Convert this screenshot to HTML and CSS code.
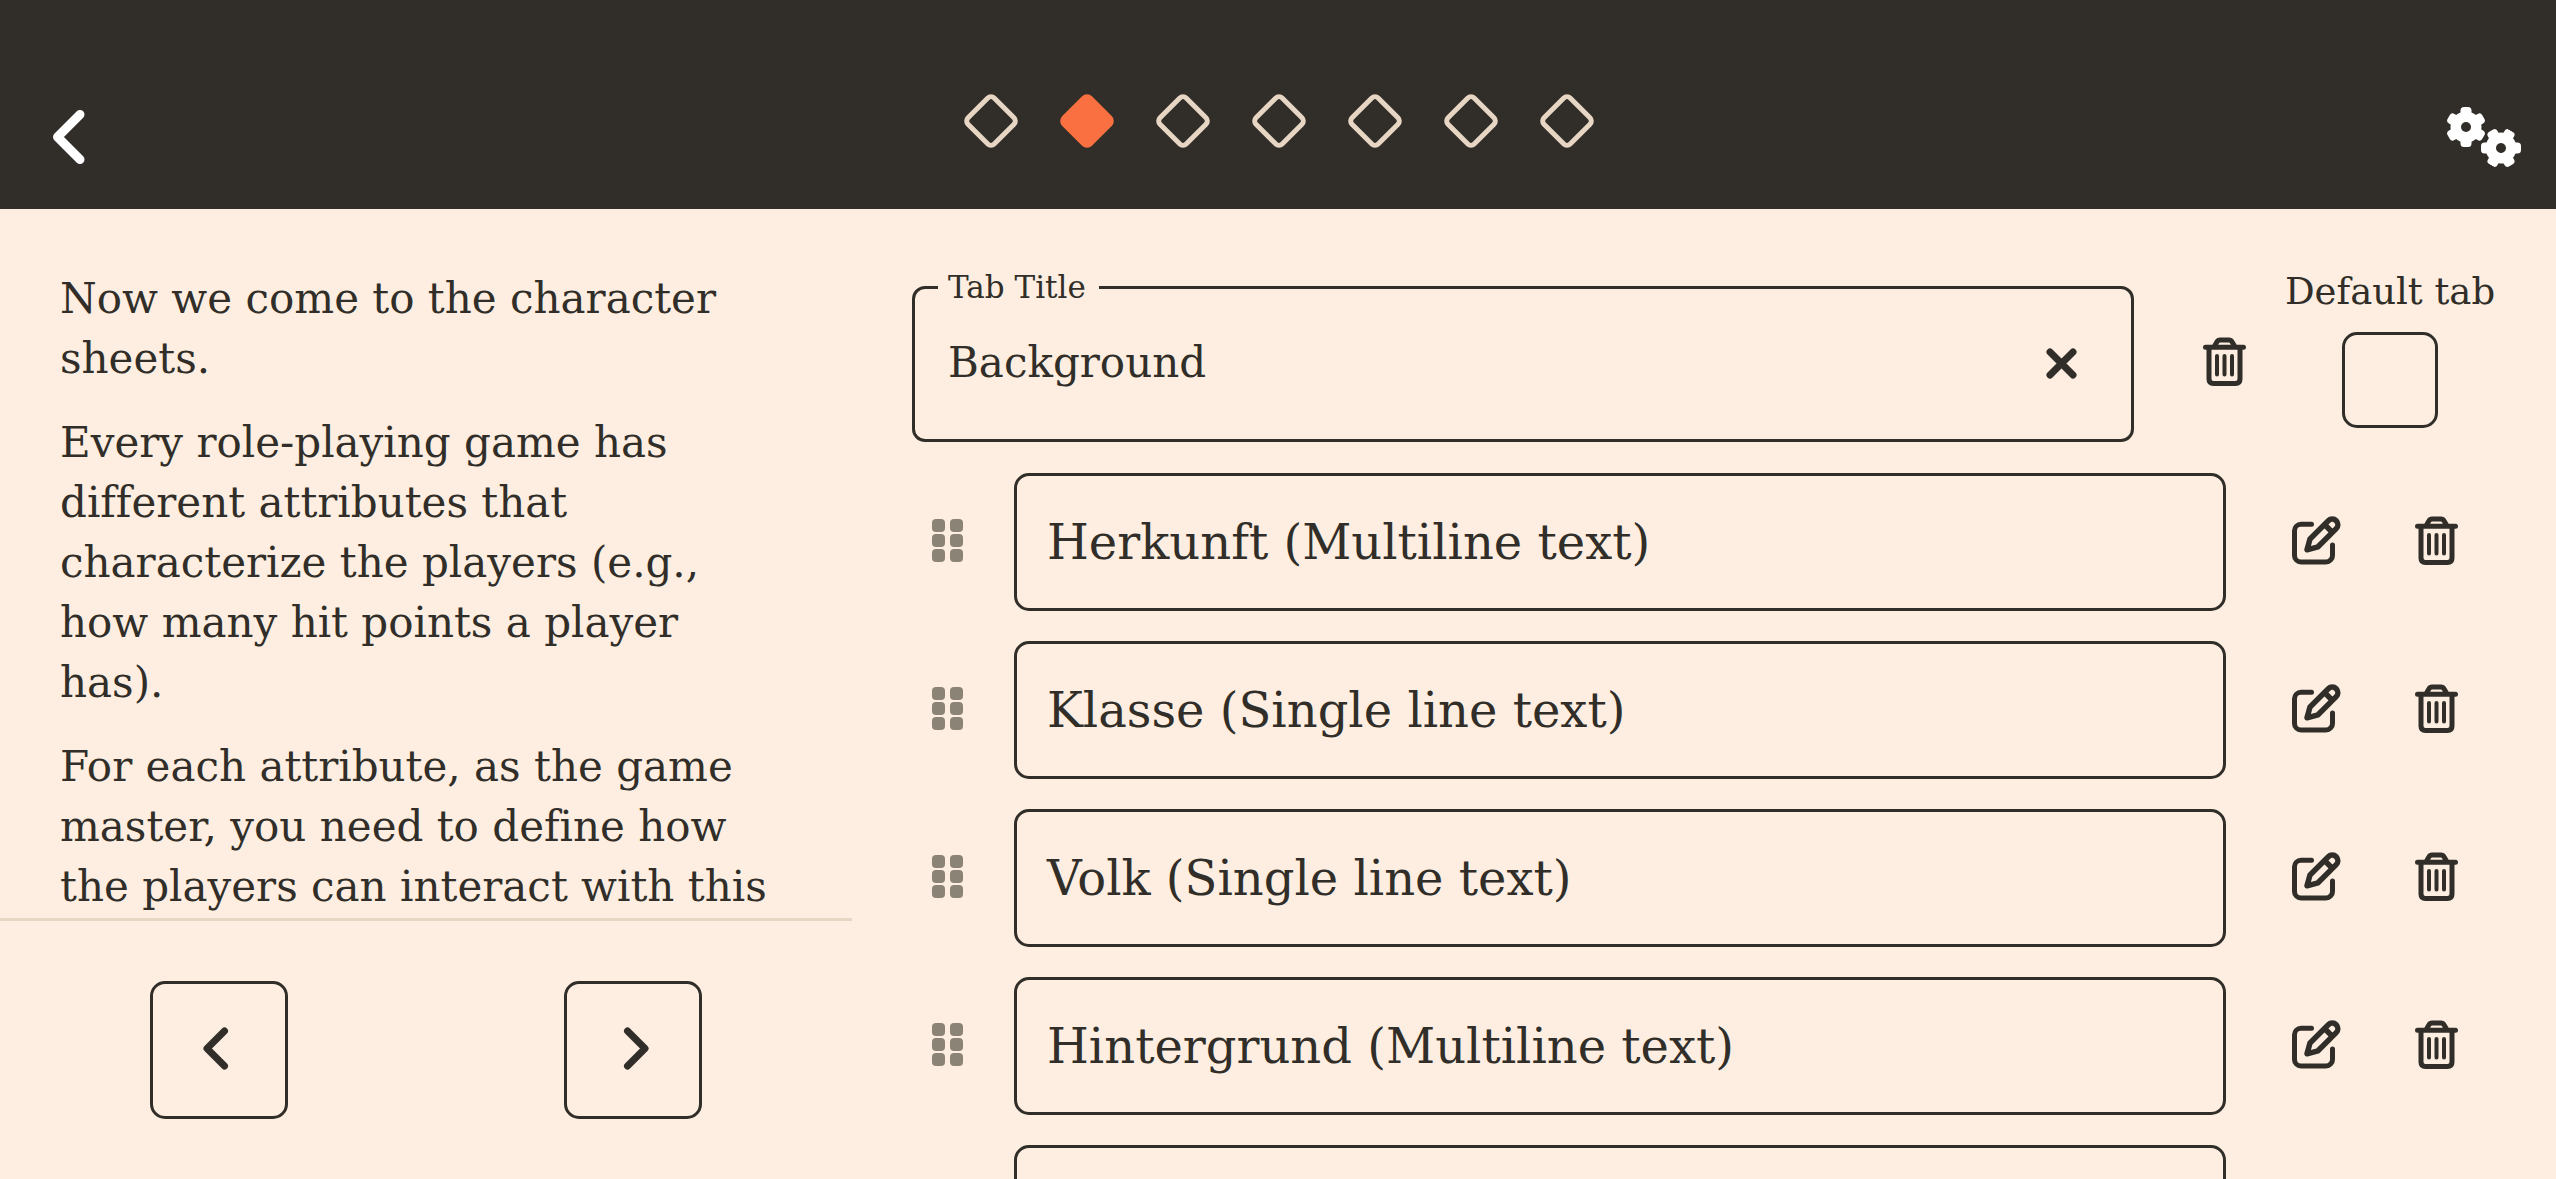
FILE: index.html
```html
<!DOCTYPE html>
<html lang="en">
<head>
<meta charset="utf-8">
<meta name="viewport" content="width=device-width, initial-scale=1">
<title>Character sheet setup</title>
<link rel="stylesheet" href="styles.css">
</head>
<body>
<svg class="sprite" aria-hidden="true">
  <symbol id="trash" viewBox="0 0 43 49">
    <g fill="none" stroke="currentColor" stroke-linecap="round" stroke-linejoin="round">
      <path stroke-width="5" d="M2.500 10.300H40.500M6 11V42Q6 46.500 10.500 46.500H32.500Q37 46.500 37 42V11M11.500 9L14 4.800Q15 3 17 3H26Q28 3 29 4.800L31.500 9"/>
      <path stroke-width="4" d="M14 19V37.500M21.500 19V37.500M29 19V37.500"/>
    </g>
  </symbol>
  <symbol id="edit" viewBox="0 0 49 49">
    <g fill="none" stroke="currentColor" stroke-width="5" stroke-linecap="round" stroke-linejoin="round">
      <path d="M19.500 8.300H9A6.500 6.500 0 0 0 2.500 14.800V39.500A6.500 6.500 0 0 0 9 46H34A6.500 6.500 0 0 0 40.500 39.500V29"/>
      <path stroke-width="5.500" d="M15 33.800L18 23L36.300 4.700A5.500 5.500 0 0 1 44.200 12.600L26 30.800ZM33 9L40 16"/>
    </g>
  </symbol>
  <symbol id="grip" viewBox="0 0 32 43">
    <g fill="currentColor">
      <rect width="13" height="13" rx="4"/><rect x="18" width="13" height="13" rx="4"/>
      <rect y="15" width="13" height="13" rx="4"/><rect x="18" y="15" width="13" height="13" rx="4"/>
      <rect y="30" width="13" height="13" rx="4"/><rect x="18" y="30" width="13" height="13" rx="4"/>
    </g>
  </symbol>
  <symbol id="gear" viewBox="-20 -20 40 40">
    <mask id="hub"><rect x="-20" y="-20" width="40" height="40" fill="#fff"/><circle r="5" fill="#000"/></mask>
    <g fill="currentColor" mask="url(#hub)">
      <circle r="15.500"/>
      <rect x="-5.500" y="-20" width="11" height="40" rx="3.500"/>
      <rect x="-5.500" y="-20" width="11" height="40" rx="3.500" transform="rotate(60)"/>
      <rect x="-5.500" y="-20" width="11" height="40" rx="3.500" transform="rotate(120)"/>
    </g>
  </symbol>
</svg>

<header class="topbar">
  <button class="topbar-button" aria-label="Back">
    <svg width="32" height="54" viewBox="0 0 32 54" fill="none" stroke="currentColor" stroke-width="9" stroke-linecap="round" stroke-linejoin="round"><path d="M27 4.500L4.500 27L27 49.500"/></svg>
  </button>
  <ol class="steps" aria-label="Progress">
    <li class="step"></li>
    <li class="step step-current" aria-current="step"></li>
    <li class="step"></li>
    <li class="step"></li>
    <li class="step"></li>
    <li class="step"></li>
    <li class="step"></li>
  </ol>
  <button class="topbar-button topbar-settings" aria-label="Settings">
    <svg width="76" height="61" viewBox="0 0 76 61"><use href="#gear" x="0" width="40" height="40"/><g transform="translate(55 41) rotate(30)"><use href="#gear" x="-20" y="-20" width="40" height="40"/></g></svg>
  </button>
</header>

<div class="workspace">
  <aside class="guide">
    <div class="guide-text">
      <p>Now we come to the character sheets.</p>
      <p>Every role-playing game has different attributes that characterize the players (e.g., how many hit points a player has).</p>
      <p>For each attribute, as the game master, you need to define how the players can interact with this</p>
    </div>
    <nav class="pager">
      <button class="pager-button" aria-label="Previous step">
        <svg width="26" height="43" viewBox="0 0 26 43" fill="none" stroke="currentColor" stroke-width="7" stroke-linecap="round" stroke-linejoin="round"><path d="M21.500 4L4 21.500L21.500 39"/></svg>
      </button>
      <button class="pager-button" aria-label="Next step">
        <svg width="26" height="43" viewBox="0 0 26 43" fill="none" stroke="currentColor" stroke-width="7" stroke-linecap="round" stroke-linejoin="round"><path d="M4.500 4L22 21.500L4.500 39"/></svg>
      </button>
    </nav>
  </aside>

  <main class="editor">
    <div class="tab-head">
      <fieldset class="field">
        <legend class="field-legend"><label for="tab-title">Tab Title</label></legend>
        <div class="field-row">
          <input class="field-input" id="tab-title" type="text" value="Background">
          <button class="clear-button" aria-label="Clear title">
            <svg width="31" height="31" viewBox="0 0 31 31" fill="none" stroke="currentColor" stroke-width="7" stroke-linecap="round"><path d="M4 4L27 27M27 4L4 27"/></svg>
          </button>
        </div>
      </fieldset>
      <button class="icon-button" aria-label="Delete tab"><svg width="43" height="49"><use href="#trash"/></svg></button>
      <div class="default-tab">
        <label class="default-label" for="default-tab">Default tab</label>
        <input class="default-check" id="default-tab" type="checkbox">
      </div>
    </div>

    <ul class="attributes">
      <li class="attribute">
        <button class="grip-button" aria-label="Reorder"><svg width="32" height="43"><use href="#grip"/></svg></button>
        <div class="attribute-name">Herkunft (Multiline text)</div>
        <div class="attribute-actions">
          <button class="icon-button" aria-label="Edit"><svg width="49" height="49"><use href="#edit"/></svg></button>
          <button class="icon-button" aria-label="Delete"><svg width="43" height="49"><use href="#trash"/></svg></button>
        </div>
      </li>
      <li class="attribute">
        <button class="grip-button" aria-label="Reorder"><svg width="32" height="43"><use href="#grip"/></svg></button>
        <div class="attribute-name">Klasse (Single line text)</div>
        <div class="attribute-actions">
          <button class="icon-button" aria-label="Edit"><svg width="49" height="49"><use href="#edit"/></svg></button>
          <button class="icon-button" aria-label="Delete"><svg width="43" height="49"><use href="#trash"/></svg></button>
        </div>
      </li>
      <li class="attribute">
        <button class="grip-button" aria-label="Reorder"><svg width="32" height="43"><use href="#grip"/></svg></button>
        <div class="attribute-name">Volk (Single line text)</div>
        <div class="attribute-actions">
          <button class="icon-button" aria-label="Edit"><svg width="49" height="49"><use href="#edit"/></svg></button>
          <button class="icon-button" aria-label="Delete"><svg width="43" height="49"><use href="#trash"/></svg></button>
        </div>
      </li>
      <li class="attribute">
        <button class="grip-button" aria-label="Reorder"><svg width="32" height="43"><use href="#grip"/></svg></button>
        <div class="attribute-name">Hintergrund (Multiline text)</div>
        <div class="attribute-actions">
          <button class="icon-button" aria-label="Edit"><svg width="49" height="49"><use href="#edit"/></svg></button>
          <button class="icon-button" aria-label="Delete"><svg width="43" height="49"><use href="#trash"/></svg></button>
        </div>
      </li>
      <li class="attribute">
        <button class="grip-button" aria-label="Reorder"><svg width="32" height="43"><use href="#grip"/></svg></button>
        <div class="attribute-name"></div>
        <div class="attribute-actions">
          <button class="icon-button" aria-label="Edit"><svg width="49" height="49"><use href="#edit"/></svg></button>
          <button class="icon-button" aria-label="Delete"><svg width="43" height="49"><use href="#trash"/></svg></button>
        </div>
      </li>
    </ul>
  </main>
</div>
</body>
</html>
```
FILE: styles.css
```css
:root {
  --ink: #312e29;
  --paper: #fdeee1;
  --sand: #e7d6c4;
  --muted: #8c8377;
  --accent: #fb7040;
}

* {
  box-sizing: border-box;
}

body {
  display: flex;
  flex-direction: column;
  height: 100vh;
  margin: 0;
  overflow: hidden;
  background: var(--paper);
  color: var(--ink);
  font: 42px/60px "DejaVu Serif", serif;
  font-variant-ligatures: none;
}

button {
  display: flex;
  align-items: center;
  justify-content: center;
  padding: 0;
  border: 0;
  background: none;
  color: inherit;
  cursor: pointer;
}

svg {
  display: block;
  flex: none;
}

.sprite {
  position: absolute;
  width: 0;
  height: 0;
}

/* Top bar */

.topbar {
  display: grid;
  grid-template-columns: 1fr auto 1fr;
  align-items: center;
  padding: 92px 34px 27px 53px;
  background: var(--ink);
  color: #fff;
}

.topbar-button {
  height: 90px;
  justify-self: start;
}

.topbar-settings {
  justify-self: end;
}

.steps {
  display: flex;
  align-self: start;
  gap: 54px;
  margin: 8px 0 0;
  padding: 0 17px 0 0;
  list-style: none;
}

.step {
  width: 42px;
  height: 42px;
  border: 5px solid var(--sand);
  border-radius: 7px;
  transform: rotate(45deg);
}

.step-current {
  border-color: var(--accent);
  background: var(--accent);
}

/* Guide column */

.workspace {
  display: grid;
  flex: 1;
  grid-template-columns: minmax(0, 1fr) minmax(0, 2fr);
  grid-template-rows: minmax(0, 1fr);
  min-height: 0;
}

.guide {
  display: flex;
  flex-direction: column;
}

.guide-text {
  flex: 1;
  min-height: 0;
  padding: 60px 72px 0 60px;
  overflow: hidden;
}

.guide-text p {
  margin: 0 0 24px;
}

.pager {
  display: flex;
  justify-content: space-around;
  padding: 60px 12px;
  border-top: 3px solid var(--sand);
}

.pager-button {
  width: 138px;
  height: 138px;
  padding: 0 6px 4px 0;
  border: 3px solid var(--ink);
  border-radius: 15px;
}

.pager-button:last-child {
  padding: 0 0 4px 6px;
}

/* Editor column */

.editor {
  padding: 60px 60px 0;
  overflow: hidden;
}

.tab-head {
  display: flex;
  margin-bottom: 31px;
}

.field {
  flex: 1;
  min-width: 0;
  height: 173px;
  margin: 0 30px 0 0;
  padding: 0 54px 0 23px;
  border: 3px solid var(--ink);
  border-radius: 13px;
}

.field-legend {
  padding: 0 13px 0 10px;
  font-size: 31px;
  line-height: 36px;
}

.field-row {
  display: flex;
  align-items: center;
  height: 116px;
}

.field-input {
  flex: 1;
  min-width: 0;
  padding: 0 10px;
  border: 0;
  outline: 0;
  background: none;
  color: inherit;
  font: inherit;
}

.icon-button {
  width: 120px;
  padding-bottom: 3px;
}

.tab-head .icon-button {
  padding-top: 15px;
}

.default-tab {
  display: flex;
  flex-direction: column;
  align-items: center;
  gap: 17px;
  width: 212px;
}

.default-label {
  font-size: 37px;
  line-height: 46px;
  white-space: nowrap;
}

.default-check {
  width: 96px;
  height: 96px;
  margin: 0;
  border: 3px solid var(--ink);
  border-radius: 15px;
  appearance: none;
}

.attributes {
  display: flex;
  flex-direction: column;
  gap: 30px;
  margin: 0;
  padding: 0;
  list-style: none;
}

.attribute {
  display: flex;
  gap: 30px;
  height: 138px;
}

.grip-button {
  width: 72px;
  padding-bottom: 3px;
  color: var(--muted);
  cursor: grab;
}

.attribute-name {
  display: flex;
  flex: 1;
  align-items: center;
  min-width: 0;
  padding: 0 30px;
  border: 3px solid var(--ink);
  border-radius: 15px;
  font-size: 48px;
}

.attribute-actions {
  display: flex;
}
```
